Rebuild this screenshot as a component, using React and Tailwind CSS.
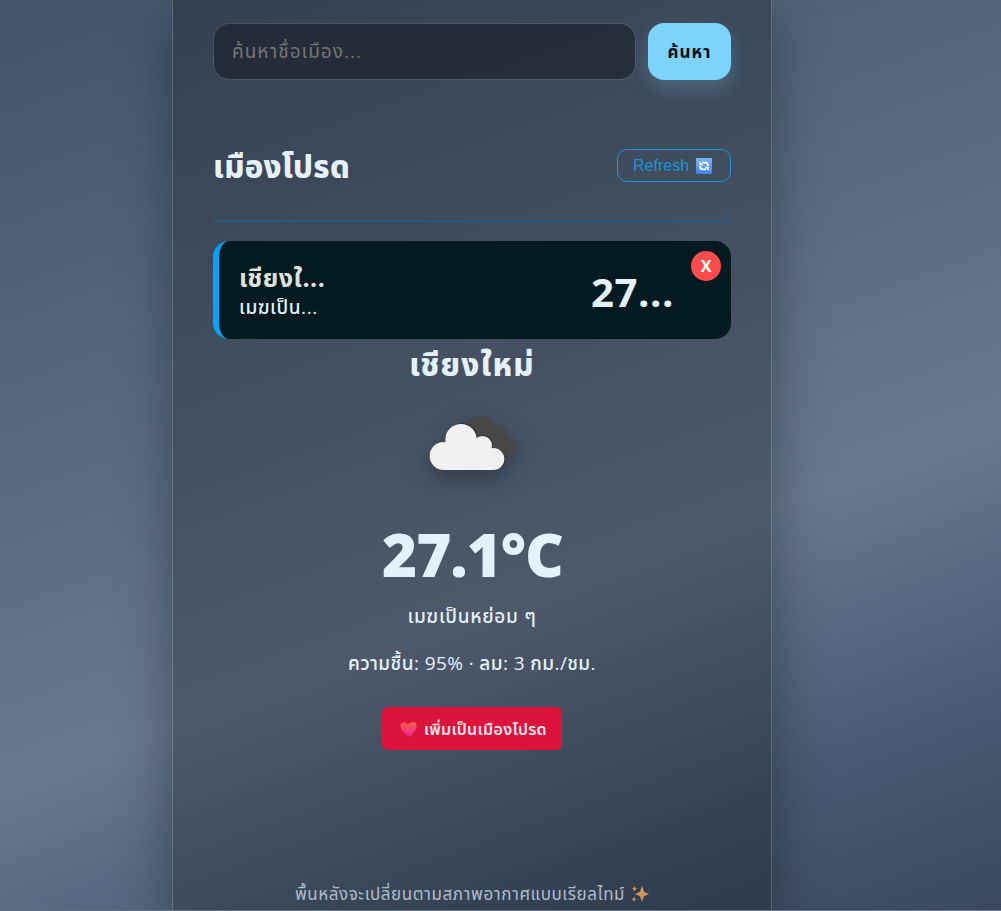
const thai = "font-['Open_Sans','Noto_Sans_Thai','Noto_Sans',sans-serif]";

function CloudIcon() {
  return (
    <svg viewBox="81 45 270 180" className="h-[60px] w-[90px] overflow-visible drop-shadow-[0_8px_12px_rgba(0,0,0,0.32)]">
      <g fill="#474747">
        <circle cx="242" cy="92" r="44" />
        <circle cx="296" cy="105" r="25" />
        <circle cx="321" cy="138" r="28" />
        <path d="M242 92L296 92L321 165L260 165Z" />
      </g>
      <g fill="#222" opacity="0.45">
        <circle cx="187" cy="116" r="47" />
        <circle cx="250" cy="134" r="29" />
        <circle cx="283" cy="176" r="33" />
      </g>
      <g fill="#f1f1f0">
        <circle cx="131" cy="168" r="42" />
        <circle cx="183" cy="119" r="47" />
        <circle cx="247" cy="137" r="29" />
        <circle cx="280" cy="177" r="33" />
        <path d="M131 130H250L280 160V210H131Z" />
      </g>
    </svg>
  );
}

function RefreshIcon() {
  return (
    <svg viewBox="0 0 16 16" className="size-4">
      <defs>
        <linearGradient id="rf" x1="0" y1="0" x2="0" y2="1">
          <stop offset="0" stopColor="#7ab6ff" />
          <stop offset="1" stopColor="#3d83ea" />
        </linearGradient>
      </defs>
      <rect width="16" height="16" rx="1" fill="url(#rf)" />
      <g fill="none" stroke="#fff" strokeWidth="1.900">
        <path d="M6 4.600H9.500Q11.900 4.600 11.900 8" />
        <path d="M10 11.400H6.500Q4.100 11.400 4.100 8" />
      </g>
      <path d="M3.200 3v4.300h4.300ZM12.800 13V8.700H8.500Z" fill="#fff" />
    </svg>
  );
}

function HeartIcon() {
  return (
    <svg viewBox="0 0 17 16" className="h-4 w-[17px]">
      <defs>
        <linearGradient id="ht" x1="0" y1="0" x2="0" y2="1">
          <stop offset="0" stopColor="#f9644c" />
          <stop offset="1" stopColor="#ee1f98" />
        </linearGradient>
      </defs>
      <path d="M9.500 15.800C5.500 14 .5 9 .5 4.500C.5 .8 6 .3 8 4.200C9.500 .3 16 -.2 16.500 4C17 8.500 13.500 13 9.500 15.800Z" fill="url(#ht)" />
    </svg>
  );
}

function SparklesIcon() {
  return (
    <svg viewBox="0 0 18 18" className="size-[18px]">
      <defs>
        <linearGradient id="sp" x1="0" y1="0" x2="0" y2="1">
          <stop offset="0" stopColor="#d6a95c" />
          <stop offset="1" stopColor="#c98560" />
        </linearGradient>
      </defs>
      <path d="M11 1L13 6.800L18 9L13 11.200L11 17L9 11.200L4 9L9 6.800ZM3.500 1L4.300 3L6.300 3.800L4.300 4.600L3.500 6.600L2.700 4.600L.7 3.800L2.700 3ZM3 11.500L3.800 13.500L5.800 14.300L3.800 15.100L3 17L2.200 15.100L.2 14.300L2.200 13.500Z" fill="url(#sp)" />
    </svg>
  );
}

export default function App() {
  return (
    <div className={`flex h-[911px] overflow-hidden border-b border-white/15 bg-[linear-gradient(160deg,#43546a_0%,#68788f_62%,#475870_85%,#3a495c_100%)] pl-[172px] text-[#e6f1ff] ${thai}`}>
      <main className="flex h-full w-[600px] flex-col border-x border-white/20 bg-black/25 px-10 pt-[23px] shadow-[0_20px_50px_rgba(0,0,0,0.35)]">
        <form className="flex h-[57px] shrink-0 gap-3">
          <input
            placeholder="ค้นหาชื่อเมือง..."
            className="w-[423px] rounded-2xl border border-white/10 bg-[#10141c]/50 bg-clip-padding px-[18px] text-[19px] tracking-[1px] outline-none placeholder:text-[#757575]"
          />
          <button type="button" className="flex-1 rounded-2xl bg-[#7dd3fc] pt-px text-[17px] font-bold tracking-[1px] text-[#001020] shadow-[0_8px_20px_rgba(125,211,252,0.25)]">
            ค้นหา
          </button>
        </form>
        <header className="mt-[69px] flex h-[33px] shrink-0 items-center justify-between">
          <h2 className="pt-px text-[31px] leading-none font-extrabold tracking-[0.3px]">เมืองโปรด</h2>
          <button className="flex h-[33px] w-[114px] items-center gap-[7px] rounded-[10px] border border-[#1f95da] pt-px pl-[15px] font-['Liberation_Sans',sans-serif] text-[16px] text-[#1b93d8]">
            Refresh <RefreshIcon />
          </button>
        </header>
        <hr className="mt-[38px] h-[2px] shrink-0 border-0 bg-[#265a7c]" />
        <section className="relative mt-[19px] flex h-[98px] shrink-0 items-center justify-between rounded-2xl border-l-[6px] border-[#03a3f8] bg-[#041a21] pr-[57px] pl-5">
          <div className="pt-px">
            <div className="text-[25px] leading-[32px] font-bold tracking-[0.5px] text-[#e0e0dc]">เชียงใ...</div>
            <div className="text-[19px] leading-[28px] font-medium tracking-[0.6px]">เมฆเป็น...</div>
          </div>
          <div className="pt-[3px] text-[40px] leading-none font-bold tracking-[0.6px]">27...</div>
          <button className="absolute top-[10px] right-[10px] size-[30px] rounded-full bg-[#ff4c4c] text-[16px] font-bold text-white">X</button>
        </section>
        <section className="flex flex-col items-center">
          <h2 className="mt-[7px] text-[31px] leading-[36px] font-extrabold tracking-[1.2px]">เชียงใหม่</h2>
          <div className="mt-[33px]"><CloudIcon /></div>
          <div className="mt-[44px] pl-px text-[60px] leading-[70px] font-extrabold tracking-[-1px]">27.1°C</div>
          <p className="mt-[13px] text-[19px] leading-7 font-medium tracking-[0.7px]">เมฆเป็นหย่อม ๆ</p>
          <p className="mt-[19px] text-[19px] leading-7 font-medium tracking-[0.4px]">ความชื้น: 95% · ลม: 3 กม./ชม.</p>
          <button className="mt-[30px] flex h-[43px] w-[180px] items-center justify-center gap-[7px] rounded-md bg-[#dc143c] pl-[3px] text-[16px] font-semibold tracking-[0.3px] text-[#ffe4f0]">
            <HeartIcon /> เพิ่มเป็นเมืองโปรด
          </button>
        </section>
        <footer className="mt-[132px] flex shrink-0 items-center justify-center gap-[6px] text-[17px] leading-6 tracking-[0.55px] whitespace-nowrap text-[#b0bccc]">
          พื้นหลังจะเปลี่ยนตามสภาพอากาศแบบเรียลไทม์ <SparklesIcon />
        </footer>
      </main>
    </div>
  );
}
